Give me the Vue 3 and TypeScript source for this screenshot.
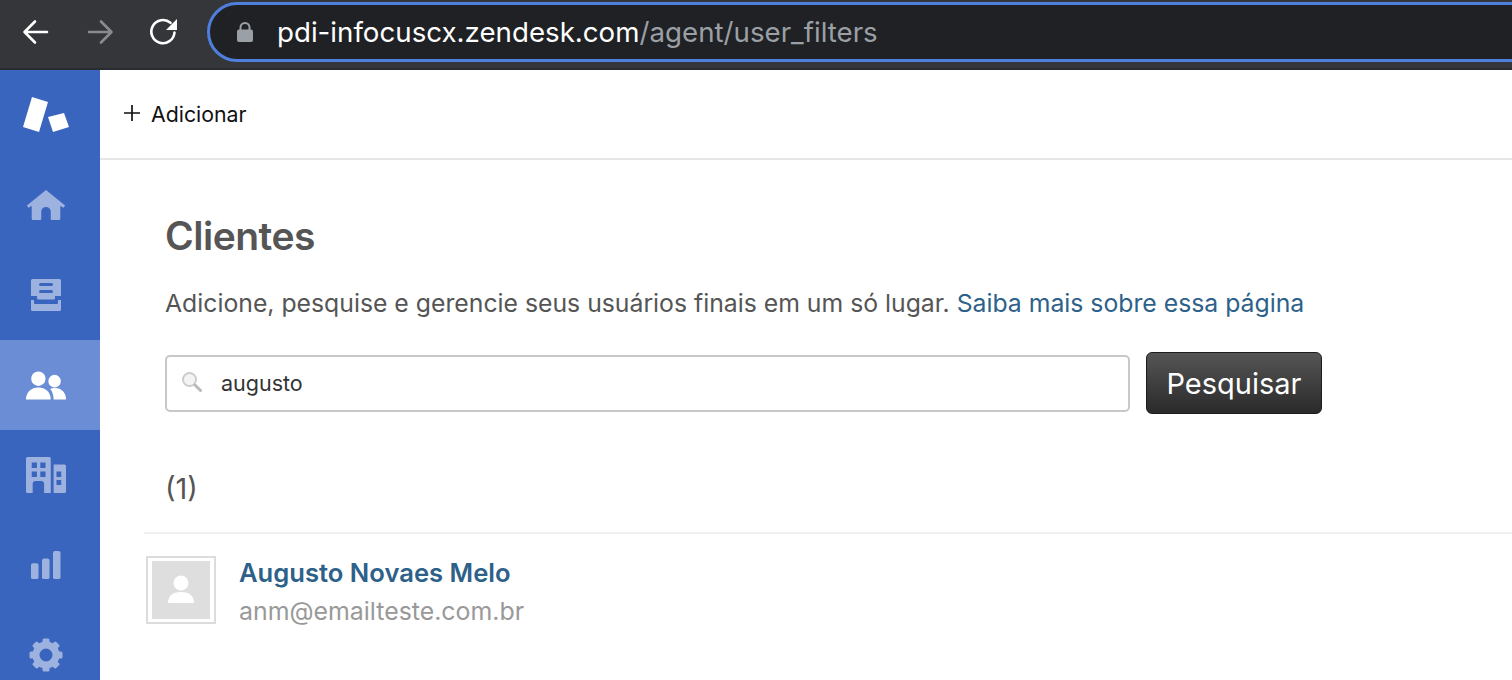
<script setup lang="ts">
const navItems = [
  { id: 'home', active: false },
  { id: 'views', active: false },
  { id: 'users', active: true },
  { id: 'orgs', active: false },
  { id: 'reports', active: false },
  { id: 'settings', active: false },
];

const gearTeeth = [0, 45, 90, 135, 180, 225, 270, 315];
</script>

<template>
  <div class="page">
    <header class="browser">
      <svg class="nav-icon first" width="32" height="32" viewBox="0 0 32 32" fill="none" stroke="#fff" stroke-width="2.6" stroke-linecap="round" stroke-linejoin="round">
        <path d="M27 16H5M15 5.500 4.500 16 15 26.500" />
      </svg>
      <svg class="nav-icon" width="32" height="32" viewBox="0 0 32 32" fill="none" stroke="#8a8b8d" stroke-width="2.600" stroke-linecap="round" stroke-linejoin="round">
        <path d="M5 16h22M17 5.500 27.500 16 17 26.500" />
      </svg>
      <svg class="nav-icon" width="32" height="32" viewBox="0 0 32 32" fill="none">
        <path d="M26.500 16.500A11.600 11.600 0 1 1 22.500 6.800" stroke="#fff" stroke-width="2.600" stroke-linecap="round" />
        <path d="M29 3v11H18z" fill="#fff" />
      </svg>
      <div class="url-bar">
        <svg width="18" height="22" viewBox="0 0 18 22" class="lock">
          <path d="M4.500 9V6.500a4.500 4.500 0 0 1 9 0V9" fill="none" stroke="#9aa0a6" stroke-width="2" />
          <rect x="1" y="8.500" width="16" height="12.500" rx="2" fill="#9aa0a6" />
        </svg>
        <span class="host">pdi-infocuscx.zendesk.com</span><span class="path">/agent/user_filters</span>
      </div>
    </header>

    <div class="app">
      <aside class="sidebar">
        <div class="logo">
          <svg width="46" height="36" viewBox="0 0 46 36" fill="#fff">
            <path d="M9 0 25 5 16 35 0 30z" />
            <path d="M25 20 41 16 46 30 30 35z" />
          </svg>
        </div>
        <div v-for="item in navItems" :key="item.id" class="nav-item" :class="{ active: item.active }">
          <svg v-if="item.id === 'home'" width="40" height="32" viewBox="0 0 42 34" preserveAspectRatio="none" fill="currentColor">
            <path d="M21 1 41 17.500 39.500 20 36 18v13.500a1.500 1.500 0 0 1-1.500 1.500H27a1 1 0 0 1-1-1v-8a5 5 0 0 0-10 0v8a1 1 0 0 1-1 1H7.500A1.500 1.500 0 0 1 6 31.500V18l-3.500 2L1 17.500z" />
          </svg>
          <svg v-else-if="item.id === 'views'" width="30" height="32" viewBox="0 0 30 32" fill="currentColor">
            <path fill-rule="evenodd" d="M1.500 0h27A1.500 1.500 0 0 1 30 1.500V17h-6v2a1.500 1.500 0 0 1-1.500 1.500h-15A1.500 1.500 0 0 1 6 19v-2H0V1.500A1.500 1.500 0 0 1 1.500 0zM9.500 4a1.500 1.500 0 0 0 0 3h11a1.500 1.500 0 0 0 0-3zm0 7a1.500 1.500 0 0 0 0 3h11a1.500 1.500 0 0 0 0-3z" />
            <path d="M0 21h3v3a1 1 0 0 0 1 1h22a1 1 0 0 0 1-1v-3h3v9.500a1.500 1.500 0 0 1-1.500 1.500h-27A1.500 1.500 0 0 1 0 30.500z" />
          </svg>
          <svg v-else-if="item.id === 'users'" width="42" height="29" viewBox="0 0 44 30" preserveAspectRatio="none" fill="currentColor">
            <circle cx="14" cy="8" r="7.500" />
            <circle cx="31" cy="10.500" r="6.500" />
            <path d="M1 29.500C1 22 6.500 17 14 17s13 5 13 12.500z" />
            <path d="M26.500 18.500c1-.5 3-.8 5-.8 7 0 11.500 5 11.500 11.800H30c0-4-1-8-3.500-11z" />
          </svg>
          <svg v-else-if="item.id === 'orgs'" width="40" height="36" viewBox="0 0 42 36" preserveAspectRatio="none" fill="currentColor">
            <path fill-rule="evenodd" d="M1.500 0h23A1.500 1.500 0 0 1 26 1.500V36h-7V27a3 3 0 0 0-3-3h-6a3 3 0 0 0-3 3v9H1.500A1.500 1.500 0 0 1 0 34.500V1.500A1.500 1.500 0 0 1 1.500 0zM6 5.500V11h5.500V5.500zm9 0V11h5.500V5.500zm-9 9V20h5.500v-5.500zm9 0V20h5.500v-5.500z" />
            <path fill-rule="evenodd" d="M29 7.500h11.500A1.500 1.500 0 0 1 42 9v25.500a1.500 1.500 0 0 1-1.500 1.500H29zM32 14.500V20h5v-5.500zm0 8.500v5h5v-5z" />
          </svg>
          <svg v-else-if="item.id === 'reports'" width="30" height="28" viewBox="0 0 30 30" preserveAspectRatio="none" fill="currentColor">
            <rect x="0" y="13" width="7.500" height="17" rx="2" />
            <rect x="11" y="8" width="7.500" height="22" rx="2" />
            <rect x="22" y="0" width="7.500" height="30" rx="2" />
          </svg>
          <svg v-else width="34" height="34" viewBox="0 0 34 34" fill="currentColor">
            <circle cx="17" cy="17" r="10" fill="none" stroke="currentColor" stroke-width="7" />
            <rect v-for="deg in gearTeeth" :key="deg" x="13.500" y="0.500" width="7" height="7" rx="1.500" :transform="`rotate(${deg} 17 17)`" />
          </svg>
        </div>
      </aside>

      <main class="main">
        <div class="toolbar">
          <svg width="18" height="18" viewBox="0 0 18 18" stroke="#111" stroke-width="1.700" fill="none">
            <path d="M9 1v16M1 9h16" />
          </svg>
          <span class="add">Adicionar</span>
        </div>

        <section class="content">
          <h1>Clientes</h1>
          <p class="intro">
            Adicione, pesquise e gerencie seus usuários finais em um só lugar.
            <a>Saiba mais sobre essa página</a>
          </p>

          <div class="search-row">
            <div class="search-box">
              <svg width="24" height="24" viewBox="0 0 24 24" fill="none">
                <circle cx="7.500" cy="8.500" r="6.500" fill="#f4f4f4" stroke="#cdcdcd" stroke-width="2" />
                <path d="M13 14 18.500 19.500" stroke="#b9b9b9" stroke-width="3" stroke-linecap="round" />
              </svg>
              <span>augusto</span>
            </div>
            <button class="search-btn">Pesquisar</button>
          </div>

          <div class="count">(1)</div>
        </section>

        <div class="result">
          <div class="avatar">
            <svg width="58" height="58" viewBox="0 0 58 58" fill="#fff">
              <circle cx="29" cy="22" r="7.500" />
              <path d="M16 42c0-8 6-11 13-11s13 3 13 11z" />
            </svg>
          </div>
          <div class="person">
            <a class="name">Augusto Novaes Melo</a>
            <span class="email">anm@emailteste.com.br</span>
          </div>
        </div>
      </main>
    </div>
  </div>
</template>

<style scoped>
.page {
  width: 1512px;
  height: 680px;
  overflow: hidden;
  font-family: Inter, "Liberation Sans", sans-serif;
  background: #fff;
}

.browser {
  box-sizing: border-box;
  height: 70px;
  display: flex;
  align-items: center;
  padding-bottom: 4px;
  gap: 18px;
  background: #35363a;
  border-bottom: 2px solid #2a2b2e;
}

.nav-icon.first {
  margin-left: 20px;
}

.nav-icon {
  margin-right: 14px;
  flex: none;
}

.url-bar {
  flex: none;
  box-sizing: border-box;
  width: 1400px;
  height: 60px;
  margin-left: -5px;
  display: flex;
  align-items: center;
  padding-left: 26px;
  border: 3px solid #4e7fdf;
  border-radius: 30px;
  background: #202124;
  font-size: 27.700px;
}

.lock {
  margin-right: 23px;
}

.host {
  color: #fff;
}

.path {
  color: #9aa0a6;
}

.app {
  display: flex;
  height: 610px;
}

.sidebar {
  flex: none;
  width: 100px;
  background: #3a65bf;
  overflow: hidden;
}

.logo,
.nav-item {
  box-sizing: border-box;
  height: 90px;
  display: flex;
  align-items: center;
  justify-content: center;
  padding-right: 8px;
}

.nav-item {
  color: #9db2de;
}

.nav-item.active {
  background: #6b8dd6;
  color: #fff;
}

.main {
  flex: 1;
  min-width: 0;
}

.toolbar {
  box-sizing: border-box;
  height: 90px;
  display: flex;
  align-items: center;
  gap: 10px;
  padding: 0 0 2px 23px;
  border-bottom: 2px solid #e6e6e6;
}

.add {
  margin-top: 2px;
  font-size: 21.300px;
  color: #111;
}

.content {
  padding: 53px 0 0 65px;
}

h1 {
  margin: 0;
  font-size: 39px;
  line-height: 46px;
  font-weight: 600;
  letter-spacing: -0.5px;
  color: #555;
}

.intro {
  margin: 29px 0 0;
  font-size: 24.780px;
  line-height: 30px;
  color: #555;
}

.intro a {
  color: #2d6189;
}

.search-row {
  display: flex;
  align-items: center;
  gap: 16px;
  margin-top: 34px;
}

.search-box {
  box-sizing: border-box;
  width: 965px;
  height: 57px;
  display: flex;
  align-items: center;
  gap: 15px;
  padding-left: 15px;
  border: 2px solid #c8c8c8;
  border-radius: 5px;
  font-size: 21.500px;
  color: #333;
}

.search-btn {
  box-sizing: border-box;
  width: 176px;
  height: 62px;
  padding: 0;
  border: 1px solid #1c1c1c;
  border-radius: 6px;
  background: linear-gradient(#555, #2a2a2a);
  color: #fff;
  font-family: inherit;
  font-size: 29px;
}

.count {
  margin: 57px 0 0;
  font-size: 29px;
  line-height: 36px;
  color: #555;
}

.result {
  display: flex;
  gap: 23px;
  margin: 25px 0 0 44px;
  padding: 22px 0 0 2px;
  border-top: 2px solid #f0f0f0;
}

.avatar {
  box-sizing: border-box;
  width: 70px;
  height: 68px;
  display: flex;
  align-items: center;
  justify-content: center;
  border: 2px solid #dcdcdc;
  background: #fff;
}

.avatar svg {
  background: #dedede;
}

.person {
  display: flex;
  flex-direction: column;
}

.name {
  font-size: 25.600px;
  line-height: 34px;
  font-weight: 600;
  color: #2d6189;
}

.email {
  margin-top: 4px;
  font-size: 24.900px;
  line-height: 34px;
  color: #999;
}
</style>
